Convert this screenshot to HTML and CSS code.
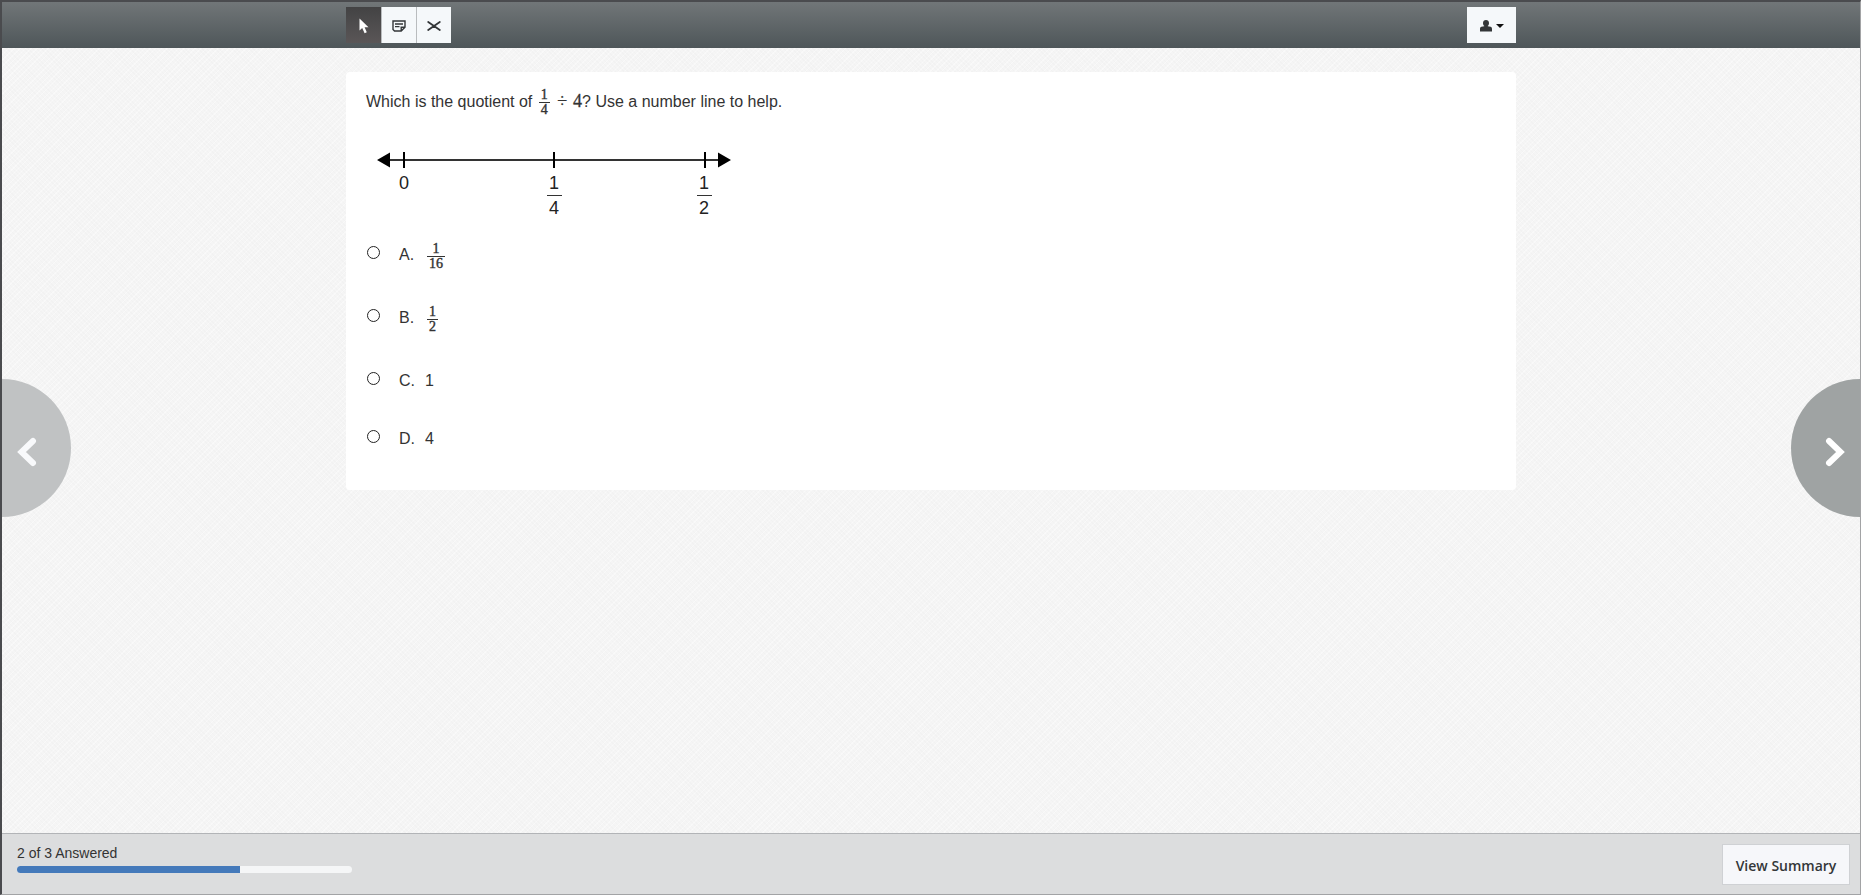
FILE: index.html
```
<!DOCTYPE html>
<html lang="en">
<head>
    <meta charset="UTF-8">
    <meta name="viewport" content="width=device-width, initial-scale=1.0">
    <title>Assessment - Question</title>
    <link rel="stylesheet" href="styles.css">
</head>
<body>
    <header class="topbar">
        <div class="container topbar-inner">
            <div class="tools">
                <button type="button" class="tool active" aria-label="Pointer">
                    <svg width="10" height="16" viewBox="0 0 10 16"><path d="M0.5 0.5V12.5L3.2 10L5.6 15.2L7.8 14.2L5.6 9.2H9.5Z" fill="#fff"/></svg>
                </button>
                <button type="button" class="tool" aria-label="Notes">
                    <svg width="14" height="12" viewBox="0 0 14 12" fill="none" stroke="#333638" stroke-width="1.4"><path d="M1 1H13V7.2L9.2 11H2.5L1 9.5ZM13 7.2H9.2V11M3 4H11M3 6.6H7.5"/></svg>
                </button>
                <button type="button" class="tool" aria-label="Eliminate answer">
                    <svg width="14" height="10" viewBox="0 0 14 10" fill="none" stroke="#333638" stroke-width="1.8" stroke-linecap="round"><path d="M1.2 1L12.8 9M12.8 1L1.2 9"/></svg>
                </button>
            </div>
            <button type="button" class="user-menu" aria-label="User menu">
                <svg width="12" height="12" viewBox="0 0 12 12" fill="#333638"><path d="M6 0C4.2 0 3 1.2 3 2.9C3 4.2 3.5 5.2 4.2 5.8V6.2L1.4 6.8C0.5 7.1 0 8 0 9V11.5H12V9C12 8 11.5 7.1 10.6 6.8L7.8 6.2V5.8C8.5 5.2 9 4.2 9 2.9C9 1.2 7.8 0 6 0Z"/></svg>
                <svg width="8" height="4" viewBox="0 0 8 4"><path d="M0 0H8L4 4Z" fill="#111"/></svg>
            </button>
        </div>
    </header>

    <main class="main">
        <div class="container">
            <form class="card">
                <p class="question">Which is the quotient of
                    <span class="frac"><span>1</span><span class="den">4</span></span>
                    <span class="math"><span>÷</span><span>4</span></span>? Use a number line to help.</p>

                <svg class="number-line" width="356" height="76" viewBox="0 0 356 76" role="img" aria-label="Number line from 0 to one half">
                    <path d="M8 17H348" stroke="#333" stroke-width="2"/>
                    <path d="M27 9V25M177 9V25M328 9V25" stroke="#000" stroke-width="2"/>
                    <path d="M0 17L13 9.5V24.5ZM354 17L341 9.5V24.5Z"/>
                    <path d="M170 52.5H185M320 52.5H335" stroke="#333"/>
                    <text x="27" y="46">0</text>
                    <text x="177" y="46">1</text>
                    <text x="177" y="71">4</text>
                    <text x="327" y="46">1</text>
                    <text x="327" y="71">2</text>
                </svg>

                <div class="options">
                    <label class="option">
                        <input type="radio" name="answer" value="a">
                        <span class="letter">A.</span>
                        <span class="frac"><span>1</span><span class="den">16</span></span>
                    </label>
                    <label class="option">
                        <input type="radio" name="answer" value="b">
                        <span class="letter">B.</span>
                        <span class="frac"><span>1</span><span class="den">2</span></span>
                    </label>
                    <label class="option">
                        <input type="radio" name="answer" value="c">
                        <span class="letter">C.</span>
                        <span>1</span>
                    </label>
                    <label class="option">
                        <input type="radio" name="answer" value="d">
                        <span class="letter">D.</span>
                        <span>4</span>
                    </label>
                </div>
            </form>
        </div>
    </main>

    <button type="button" class="nav prev" aria-label="Previous question">
        <svg width="20" height="30" viewBox="0 0 20 30" fill="none" stroke="#f8f9fb" stroke-width="6" stroke-linecap="round"><path d="M16 4L4.5 15L16 26"/></svg>
    </button>
    <button type="button" class="nav next" aria-label="Next question">
        <svg width="20" height="30" viewBox="0 0 20 30" fill="none" stroke="#fff" stroke-width="6" stroke-linecap="round"><path d="M4 4L15.5 15L4 26"/></svg>
    </button>

    <footer class="footer">
        <div class="progress">
            <div id="progressLabel">2 of 3 Answered</div>
            <div class="track" role="progressbar" aria-labelledby="progressLabel" aria-valuemin="0" aria-valuemax="3" aria-valuenow="2">
                <div class="fill" style="width: 66.67%"></div>
            </div>
        </div>
        <button type="button" class="summary">View Summary</button>
    </footer>
</body>
</html>
```
FILE: styles.css
```
* {
    box-sizing: border-box;
}
body {
    margin: 0;
    min-height: 100vh;
    display: flex;
    flex-direction: column;
    position: relative;
    border: 2px solid #4a4b4e;
    border-right: 1px solid #a2a3a5;
    border-bottom: 1px solid #a2a3a5;
    font-family: "Liberation Sans", Arial, sans-serif;
    font-size: 16px;
    color: #333;
    background-color: #f5f5f5;
    background-image:
        repeating-linear-gradient(45deg, rgba(0,0,0,0.012) 0 1px, transparent 1px 3px),
        repeating-linear-gradient(-45deg, rgba(255,255,255,0.4) 0 1px, transparent 1px 4px);
}
button {
    font: inherit;
    padding: 0;
    border: none;
    cursor: pointer;
}
.container {
    width: 100%;
    max-width: 1170px;
    margin: 0 auto;
}

/* top bar */
.topbar {
    height: 46px;
    background: linear-gradient(#717678, #4e5659);
}
.topbar-inner {
    display: flex;
    justify-content: space-between;
    padding-top: 5px;
}
.tools {
    display: flex;
}
.tool, .user-menu {
    display: flex;
    align-items: center;
    justify-content: center;
    height: 36px;
    padding-top: 2px;
    background: #f5f8fa;
}
.tool {
    width: 35px;
}
.tool + .tool {
    border-left: 1px solid #b9bcbe;
}
.tool.active {
    background: linear-gradient(#434344, #5a5657);
}
.user-menu {
    width: 49px;
    gap: 4px;
}

/* question */
.main {
    flex: 1;
    padding: 24px 0;
}
.card {
    padding: 14px 20px 8px;
    border-radius: 4px;
    background: #fff;
}
.question {
    margin: 0;
    line-height: 30px;
}
.frac {
    display: inline-flex;
    flex-direction: column;
    align-items: stretch;
    vertical-align: middle;
    margin: 0 1px 0 2px;
    font-family: "Liberation Serif", serif;
    font-size: 14px;
    line-height: 14px;
    text-align: center;
    -webkit-text-stroke: 0.4px #333;
}
.den {
    padding: 0 2px;
    border-top: 1px solid #333;
}
.math {
    display: inline-flex;
    gap: 6px;
    margin-left: 2px;
    font-family: "Liberation Serif", serif;
    font-size: 18px;
    -webkit-text-stroke: 0.3px #333;
}
.number-line {
    display: block;
    margin: 26px 0 0 11px;
}
.number-line text {
    font-size: 18px;
    text-anchor: middle;
    fill: #222;
}

/* answers */
.options {
    margin-top: 21px;
}
.option {
    display: flex;
    align-items: flex-start;
    width: fit-content;
    padding-bottom: 28px;
    line-height: 30px;
}
.option input {
    appearance: none;
    width: 13px;
    height: 13px;
    margin: 6px 19px 0 1px;
    border: 1px solid #222;
    border-radius: 50%;
    background: #fff;
}
.option input:checked {
    background: #4479ba;
}
.option .letter {
    width: 26px;
}
.option .frac {
    height: 35px;
    padding-top: 2px;
}

/* previous / next */
.nav {
    position: absolute;
    top: 50%;
    display: flex;
    align-items: center;
    width: 69px;
    height: 138px;
    padding-top: 8px;
    transform: translateY(-50%);
}
.prev {
    left: 0;
    padding-left: 15px;
    border-radius: 0 69px 69px 0;
    background: #c0c2c3;
}
.next {
    right: 0;
    justify-content: flex-end;
    padding-right: 15px;
    border-radius: 69px 0 0 69px;
    background: #9fa3a3;
}

/* footer */
.footer {
    display: flex;
    align-items: center;
    justify-content: space-between;
    height: 61px;
    padding: 0 10px 0 15px;
    border-top: 1px solid #b2b4b7;
    background: #dcddde;
}
.progress {
    width: 335px;
    padding-bottom: 12px;
    font-size: 14px;
    line-height: 20px;
}
.track {
    height: 7px;
    margin-top: 3px;
    border-radius: 4px;
    overflow: hidden;
    background: #f5f6f7;
}
.fill {
    height: 100%;
    background: #4479ba;
}
.summary {
    width: 128px;
    height: 41px;
    padding-top: 2px;
    border: 1px solid #cfd1d4;
    background: #f6f7fa;
    color: #333638;
    font-family: "Open Sans", sans-serif;
    font-size: 14px;
    font-weight: 600;
}
```
